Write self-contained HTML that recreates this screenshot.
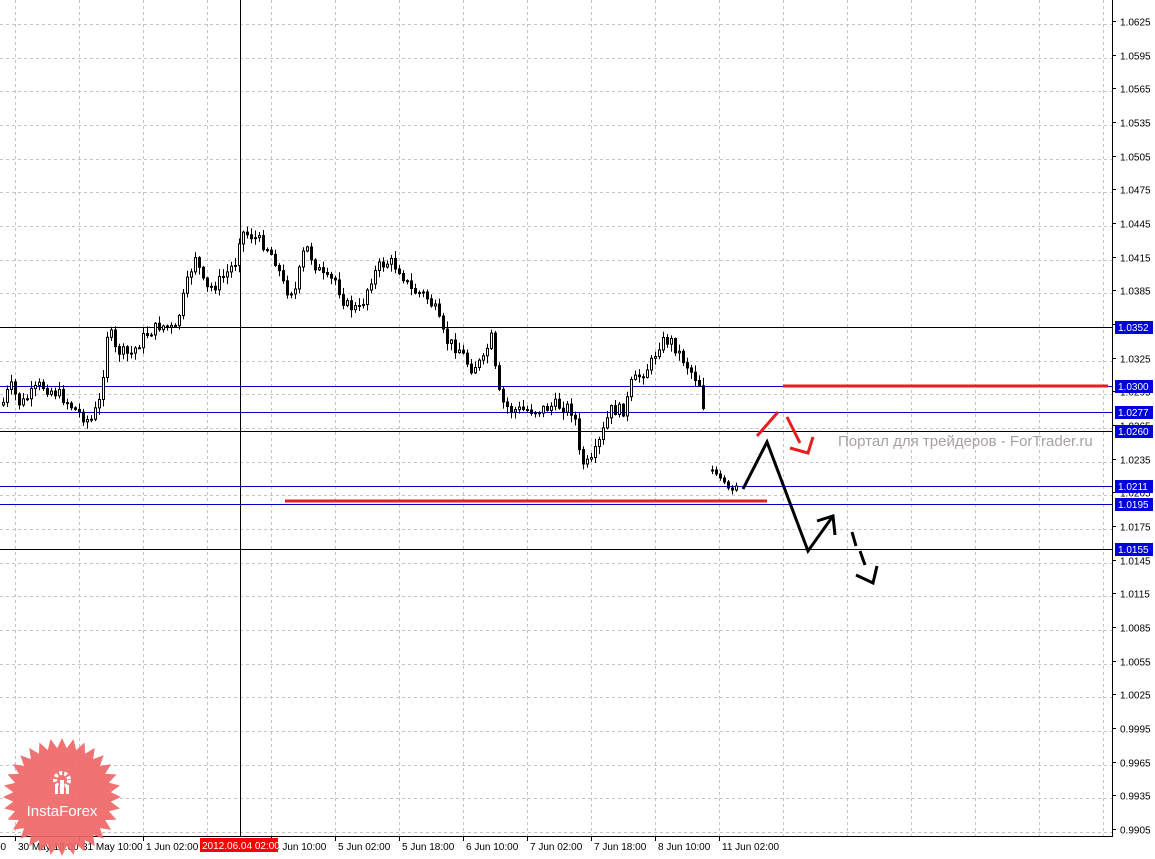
<!DOCTYPE html>
<html><head><meta charset="utf-8"><style>
html,body{margin:0;padding:0;background:#fff;width:1155px;height:859px;overflow:hidden}
svg{display:block;font-family:"Liberation Sans",sans-serif}
</style></head><body>
<svg id="c" width="1155" height="859" viewBox="0 0 1155 859" xmlns="http://www.w3.org/2000/svg">
<g id="grid" stroke="#c4c4c4" stroke-dasharray="3,3" stroke-width="1"></g>
<g id="hl"></g>
<g id="candles" stroke="#000" stroke-width="1"></g>
<line x1="240.5" y1="0" x2="240.5" y2="836" stroke="#000"/>
<text x="838" y="446" font-size="15" fill="#a8a0a0" font-family="'Liberation Sans',sans-serif">Портал для трейдеров - ForTrader.ru</text>
<line x1="783" y1="386" x2="1108" y2="386" stroke="#e32020" stroke-width="3"/>
<line x1="285" y1="501" x2="767" y2="501" stroke="#e32020" stroke-width="3"/>
<g fill="none" stroke="#000" stroke-width="3">
<polyline points="743,489 767,442 808,551 833,516"/>
<polyline points="817,521 833,516 835,535"/>
<line x1="852" y1="532" x2="856" y2="546"/><line x1="860" y1="551" x2="865" y2="565"/>
<polyline points="856,575 873,583 877,566"/>
</g>
<g fill="none" stroke="#e32020" stroke-width="3">
<line x1="757" y1="436" x2="778" y2="412"/>
<line x1="787" y1="417" x2="800" y2="443"/>
<polyline points="790,448 808,453 813,437"/>
</g>
<rect x="1113" y="0" width="42" height="859" fill="#fff"/>
<rect x="0" y="837" width="1155" height="22" fill="#fff"/>
<line x1="1112.5" y1="0" x2="1112.5" y2="836" stroke="#000"/>
<line x1="0" y1="836.5" x2="1113" y2="836.5" stroke="#000"/>
<g id="axis" font-size="10" fill="#000"></g>
<g transform="translate(62,797)">
<polygon id="star" fill="#f06666" opacity="0.92"/>
<g fill="#fff">
<circle cx="0" cy="-17" r="7" fill="none" stroke="#fff" stroke-width="4" stroke-dasharray="3,2"/>
<rect x="-2" y="-17" width="4" height="14"/>
<rect x="-7" y="-12" width="3" height="9"/><rect x="4" y="-12" width="3" height="9"/>
</g>
<text x="0" y="19" font-size="15" fill="#fff" text-anchor="middle">InstaForex</text>
</g>
</svg>
<script>
const NS="http://www.w3.org/2000/svg";
function el(p,t,a,txt){const e=document.createElementNS(NS,t);for(const k in a)e.setAttribute(k,a[k]);if(txt!==undefined)e.textContent=txt;p.appendChild(e);return e;}
const grid=document.getElementById('grid'),axis=document.getElementById('axis'),hl=document.getElementById('hl'),cd=document.getElementById('candles');
for(let i=0;i<=24;i++){const y=Math.round(21+i*33.67)+0.5;el(grid,'line',{x1:0,y1:y+3,x2:1112,y2:y+3});
 const p=(1.0625-i*0.003).toFixed(4);el(axis,'line',{x1:1112,y1:y,x2:1116,y2:y,stroke:'#000'});el(axis,'text',{x:1120,y:y+4},p);}
for(let x=15;x<1112;x+=64){el(grid,'line',{x1:x+.5,y1:0,x2:x+.5,y2:836});}
const labs=[[-8,"00"],[15,"30 May 18:00"],[79,"31 May 10:00"],[143,"1 Jun 02:00"],[271,"4 Jun 10:00"],[335,"5 Jun 02:00"],[399,"5 Jun 18:00"],[463,"6 Jun 10:00"],[527,"7 Jun 02:00"],[591,"7 Jun 18:00"],[655,"8 Jun 10:00"],[719,"11 Jun 02:00"]];
labs.forEach(([x,t])=>{el(axis,'line',{x1:x+.5,y1:836,x2:x+.5,y2:841,stroke:'#000'});el(axis,'text',{x:x+3,y:850},t);});
el(axis,'rect',{x:200,y:838,width:78,height:14,fill:'#f00'});
el(axis,'text',{x:202,y:849,fill:'#fff'},"2012.06.04 02:00");
const lines=[[327,'#000','1.0352'],[386,'#0000cc','1.0300'],[412,'#0000cc','1.0277'],[431,'#000','1.0260'],[486,'#0000cc','1.0211'],[504,'#0000cc','1.0195'],[549,'#000','1.0155']];
lines.forEach(([y,c,t])=>{el(hl,'line',{x1:0,y1:y+.5,x2:1112,y2:y+.5,stroke:c});
 el(axis,'rect',{x:1115,y:y-6,width:38,height:13,fill:'#0000dd'});el(axis,'text',{x:1118,y:y+4,fill:'#fff'},t);});
const pts=[[0,410],[10,385],[20,405],[40,385],[60,395],[75,410],[90,422],[100,400],[108,325],[115,350],[130,355],[145,335],[160,325],[175,330],[185,290],[195,255],[205,290],[215,285],[225,275],[235,262],[240,232],[250,235],[265,245],[275,260],[285,290],[295,290],[305,245],[315,265],[325,280],[335,280],[345,305],[360,310],[370,280],[380,265],[390,262],[400,270],[410,290],[425,295],[435,310],[445,340],[460,350],[470,368],[485,360],[490,330],[495,370],[500,400],[510,410],[525,410],[540,410],[555,405],[570,408],[575,420],[580,462],[590,465],[600,440],[610,410],[625,410],[630,385],[640,375],[650,365],[660,342],[670,340],[680,355],[690,370],[700,385],[706,425]];
function interp(x){for(let i=1;i<pts.length;i++){if(x<=pts[i][0]){const [x0,y0]=pts[i-1],[x1,y1]=pts[i];return y0+(y1-y0)*(x-x0)/(x1-x0);}}return pts[pts.length-1][1];}
let seed=7;function r(){seed=(seed*9301+49297)%233280;return seed/233280;}
let prev=interp(2);
function candle(x,o,c){const hi=Math.min(o,c)-1-r()*7,lo=Math.max(o,c)+1+r()*7;
 el(cd,'line',{x1:x+.5,y1:hi,x2:x+.5,y2:lo});const t=Math.min(o,c),h=Math.max(1,Math.abs(c-o));
 el(cd,'rect',{x:x-0.5,y:t,width:2,height:h,fill:c<o?'#fff':'#000'});}
for(let x=3;x<=706;x+=4){const c=interp(x)+(r()-0.5)*12;candle(Math.round(x),prev,c);prev=c;}
prev=470;[[712,470],[716,474],[720,478],[724,482],[728,488],[732,490],[736,486]].forEach(([x,c])=>{candle(x,prev,c);prev=c;});
let s="";const N=32;for(let i=0;i<N*2;i++){const a=i*Math.PI/N,R=i%2?49:59;s+=(R*Math.sin(a)).toFixed(1)+","+(-R*Math.cos(a)).toFixed(1)+" ";}
document.getElementById('star').setAttribute('points',s);
</script>
</body></html>
